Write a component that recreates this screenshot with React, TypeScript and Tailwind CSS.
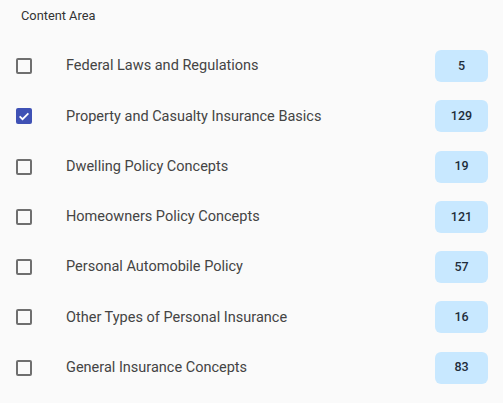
import React from 'react';

const areas = [
    { label: 'Federal Laws and Regulations', count: 5, checked: false },
    { label: 'Property and Casualty Insurance Basics', count: 129, checked: true },
    { label: 'Dwelling Policy Concepts', count: 19, checked: false },
    { label: 'Homeowners Policy Concepts', count: 121, checked: false },
    { label: 'Personal Automobile Policy', count: 57, checked: false },
    { label: 'Other Types of Personal Insurance', count: 16, checked: false },
    { label: 'General Insurance Concepts', count: 83, checked: false },
];

const Checkbox: React.FC<{ checked: boolean }> = ({ checked }) =>
    checked ? (
        <div className="w-4 h-4 rounded-[2px] bg-[#3f51b5] flex items-center justify-center shrink-0">
            <svg viewBox="0 0 24 24" className="w-[14px] h-[14px]" fill="none" stroke="white" strokeWidth={3}>
                <path d="M4.5 12.5l5 5L19.5 7.5" />
            </svg>
        </div>
    ) : (
        <div className="w-4 h-4 rounded-[2px] border-2 border-[#6f6f6f] shrink-0" />
    );

export default function App() {
    return (
        <div className="w-[503px] h-[403px] bg-[#fafafa] font-['Roboto',sans-serif] overflow-hidden">
            <div className="h-[41px] pl-[21px] pt-[8px] text-[12.8px] leading-[16px] text-[#333]">Content Area</div>
            {areas.map((a) => (
                <div key={a.label} className="h-[50.25px] flex items-center pl-4 pr-[15px]">
                    <Checkbox checked={a.checked} />
                    <span className="ml-[34px] flex-1 text-[14.5px] text-[#444]">{a.label}</span>
                    <span className="w-[53px] h-8 rounded-[6px] bg-[#c8e8ff] flex items-center justify-center text-[12.5px] font-medium text-[#1f2d3a]">
                        {a.count}
                    </span>
                </div>
            ))}
        </div>
    );
}
